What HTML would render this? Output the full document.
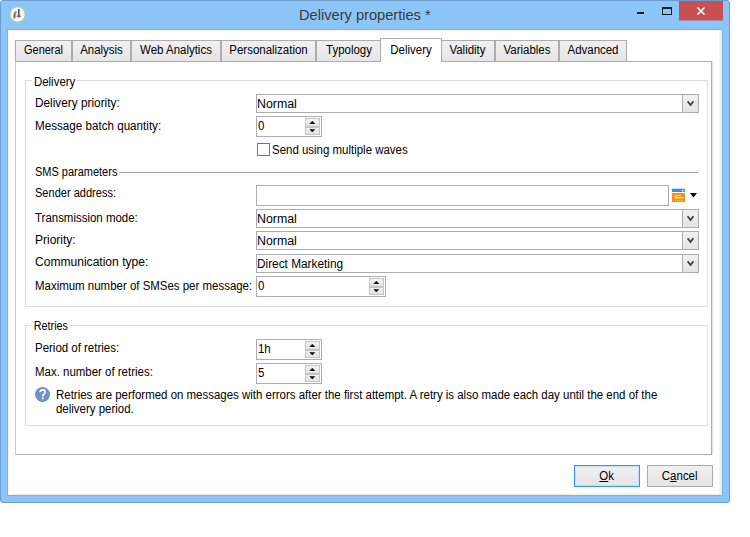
<!DOCTYPE html>
<html><head><meta charset="utf-8">
<style>
html,body{margin:0;padding:0;background:#fff;width:750px;height:537px;overflow:hidden;position:relative;font-family:"Liberation Sans",sans-serif}
.a{position:absolute;box-sizing:border-box}
.t{position:absolute;font-size:12px;line-height:14px;white-space:nowrap;color:#000;transform:scaleX(0.955);transform-origin:0 0}
#win{left:0;top:0;width:730px;height:503px;background:#8cc6f8;border:1px solid #6d9dcf;border-radius:3px}
#client{left:8px;top:30px;width:714px;height:465px;background:#fff;border-left:1px solid #fbf3ec;border-right:1px solid #e6e6e6;box-shadow:inset -2px 0 0 #f4f4f4;border-bottom:1px solid #f1ebe6;border-top:1px solid #fbf3ec}
.tab{position:absolute;box-sizing:border-box;top:40px;height:22px;border:1px solid #acacac;border-bottom:none;background:linear-gradient(#f0f0f0,#e5e5e5)}
.tab span{position:absolute;left:0;right:0;top:2px;text-align:center;font-size:12px;line-height:14px;white-space:nowrap;transform:scaleX(0.955);transform-origin:50% 0}
.tab.sel{top:38px;height:24px;background:#fff;z-index:3}
.tab.sel span{top:4px}
#page{left:15px;top:61px;width:697px;height:394px;border:1px solid #acacac;border-left-color:#c9c9c9;background:#fff;z-index:2;box-shadow:1px 0 0 #e8e8e8,2px 0 0 #f4f4f4}
.grp{position:absolute;box-sizing:border-box;border:1px solid #dcdcdc}
.glab{position:absolute;background:#fff;padding:0 2px;font-size:12px;line-height:14px;white-space:nowrap;transform:scaleX(0.955);transform-origin:0 0}
.combo{position:absolute;box-sizing:border-box;height:19px;border:1px solid #abadb3;background:#fff}
.combo .v{position:absolute;left:0px;top:2px;font-size:12px;line-height:14px;white-space:nowrap;transform:scaleX(0.955);transform-origin:0 0}
.combo .btn{position:absolute;right:0;top:0;bottom:0;width:16px;box-sizing:border-box;border-left:1px solid #acacac;background:linear-gradient(#f0f0f0,#e5e5e5)}
.spin{position:absolute;box-sizing:border-box;height:21px;border:1px solid #abadb3;background:#fff}
.spin .v{position:absolute;left:0.5px;top:2px;font-size:12px;line-height:14px;white-space:nowrap;transform:scaleX(0.955);transform-origin:0 0}
.spin .up,.spin .dn{position:absolute;right:1px;width:15px;height:8px;box-sizing:border-box;border:1px solid #c5c5c5;background:linear-gradient(#f2f2f2,#e4e4e4)}
.spin .up{top:1px;height:9px}
.spin .dn{top:10px}
.spin svg{position:absolute;left:-1px;top:-1px}
.btnb{position:absolute;box-sizing:border-box;height:22px;border:1px solid #acacac;background:linear-gradient(#f0f0f0,#e5e5e5);text-align:center;font-size:12px;line-height:21px}
.btnb span{display:inline-block;transform:scaleX(0.955)}
</style></head><body>
<div id="win" class="a"></div>
<!-- title bar -->
<svg class="a" style="left:8px;top:5px" width="20" height="20"><circle cx="9.6" cy="9.4" r="7.6" fill="#fafaf8" stroke="#a6d27a" stroke-width="1"/><rect x="10" y="4" width="1.6" height="8" fill="#4e574e"/><path d="M5.2 13.8 L5.8 8 L7.6 5.6 L8.8 7.2 L7.6 13.6 Z" fill="#9da29b"/><path d="M6 12.5 L6.5 8.5 L7.6 7.4" stroke="#5f665e" stroke-width="1" fill="none"/><ellipse cx="10.9" cy="11.3" rx="2" ry="1.3" fill="#6f756e"/></svg>
<div class="t" style="left:299px;top:6px;transform:scaleX(0.975);font-size:15px;line-height:18px;color:#3b3b3b">Delivery properties *</div>
<div class="a" style="left:637px;top:12px;width:7px;height:2px;background:#1c1c1c"></div>
<div class="a" style="left:662px;top:7px;width:10px;height:8px;border:1px solid #1a1a1a;border-top-width:2px"></div>
<div class="a" style="left:679px;top:1px;width:44px;height:20px;background:linear-gradient(#c75050 0,#c75050 19px,#a48aa8 19px)"></div>
<svg class="a" style="left:679px;top:1px" width="44" height="19"><path d="M18.5 6.5 L25.5 13.5 M25.5 6.5 L18.5 13.5" stroke="#fff" stroke-width="1.6"/></svg>

<div class="a" style="left:7px;top:29px;width:716px;height:467px;background:#7db2e4"></div>
<div id="client" class="a"></div>

<!-- tabs -->
<div class="tab" style="left:15px;width:57px"><span style="transform:scaleX(0.91)">General</span></div>
<div class="tab" style="left:72px;width:59px"><span>Analysis</span></div>
<div class="tab" style="left:131px;width:90px"><span>Web Analytics</span></div>
<div class="tab" style="left:221px;width:95px"><span>Personalization</span></div>
<div class="tab" style="left:316px;width:66px"><span>Typology</span></div>
<div class="tab sel" style="left:380px;width:62px"><span>Delivery</span></div>
<div class="tab" style="left:440px;width:55px"><span>Validity</span></div>
<div class="tab" style="left:495px;width:64px"><span>Variables</span></div>
<div class="tab" style="left:559px;width:68px"><span>Advanced</span></div>

<div id="page" class="a">
</div>

<div style="position:absolute;left:0;top:0;z-index:4">
<!-- group 1 -->
<div class="grp" style="left:25px;top:80px;width:683px;height:227px"></div>
<div class="glab" style="left:32px;top:75px">Delivery</div>
<div class="t" style="left:35px;top:96px;transform:scaleX(0.985)">Delivery priority:</div>
<div class="combo" style="left:256px;top:94px;width:443px"><span class="v" style="transform:scaleX(1.03)">Normal</span><div class="btn"><svg width="16" height="17" style="position:absolute;left:-1px;top:0"><path d="M5.6 6.3 L8.5 10.1 L11.4 6.3" fill="none" stroke="#46423f" stroke-width="1.85"/></svg></div></div>
<div class="t" style="left:35px;top:119px;transform:scaleX(0.97)">Message batch quantity:</div>
<div class="spin" style="left:256px;top:116px;width:66px"><span class="v">0</span><div class="up"><svg width="15" height="9"><path d="M4.3 6 L7.3 3 L10.3 6Z" fill="#000"/></svg></div><div class="dn"><svg width="15" height="8"><path d="M4.3 2.2 L10.3 2.2 L7.3 5.2Z" fill="#000"/></svg></div></div>
<div class="a" style="left:257px;top:143px;width:13px;height:13px;border:1px solid #767676;background:#fff"></div>
<div class="t" style="left:272px;top:143px">Send using multiple waves</div>

<div class="t" style="left:35px;top:165px;transform:scaleX(0.915)">SMS parameters</div>
<div class="a" style="left:119px;top:172px;width:579px;height:1px;background:#a0a0a0"></div>
<div class="t" style="left:35px;top:186px;transform:scaleX(0.92)">Sender address:</div>
<div class="combo" style="left:256px;top:185px;width:413px;height:21px"></div>
<svg class="a" style="left:672px;top:188px" width="26" height="15"><rect x="0" y="0.5" width="13" height="1" fill="#8fc6f2"/><rect x="0" y="1" width="13" height="3" fill="#3b8ede"/><rect x="10" y="1.8" width="1.5" height="1.4" fill="#fff"/><rect x="0" y="5" width="13" height="9" fill="#ef9418"/><rect x="2.5" y="7" width="6" height="1.2" fill="#fbe0b8"/><rect x="2.5" y="9" width="8.5" height="1.3" fill="#fde9cc"/><rect x="3" y="12" width="1" height="1" fill="#f9d8a8"/><rect x="5" y="12" width="1" height="1" fill="#f9d8a8"/><rect x="7" y="12" width="1" height="1" fill="#f9d8a8"/><rect x="9" y="12" width="1" height="1" fill="#f9d8a8"/><path d="M18 5 L25 5 L21.5 9.5Z" fill="#000"/></svg>
<div class="t" style="left:35px;top:211px">Transmission mode:</div>
<div class="combo" style="left:256px;top:209px;width:443px"><span class="v" style="transform:scaleX(1.03)">Normal</span><div class="btn"><svg width="16" height="17" style="position:absolute;left:-1px;top:0"><path d="M5.6 6.3 L8.5 10.1 L11.4 6.3" fill="none" stroke="#46423f" stroke-width="1.85"/></svg></div></div>
<div class="t" style="left:35px;top:233px;transform:scaleX(1.0)">Priority:</div>
<div class="combo" style="left:256px;top:231px;width:443px"><span class="v" style="transform:scaleX(1.03)">Normal</span><div class="btn"><svg width="16" height="17" style="position:absolute;left:-1px;top:0"><path d="M5.6 6.3 L8.5 10.1 L11.4 6.3" fill="none" stroke="#46423f" stroke-width="1.85"/></svg></div></div>
<div class="t" style="left:35px;top:255px;transform:scaleX(1.005)">Communication type:</div>
<div class="combo" style="left:256px;top:254px;width:443px"><span class="v" style="transform:scaleX(0.985)">Direct Marketing</span><div class="btn"><svg width="16" height="17" style="position:absolute;left:-1px;top:0"><path d="M5.6 6.3 L8.5 10.1 L11.4 6.3" fill="none" stroke="#46423f" stroke-width="1.85"/></svg></div></div>
<div class="t" style="left:35px;top:279px">Maximum number of SMSes per message:</div>
<div class="spin" style="left:256px;top:276px;width:130px"><span class="v">0</span><div class="up"><svg width="15" height="9"><path d="M4.3 6 L7.3 3 L10.3 6Z" fill="#000"/></svg></div><div class="dn"><svg width="15" height="8"><path d="M4.3 2.2 L10.3 2.2 L7.3 5.2Z" fill="#000"/></svg></div></div>

<!-- group 2 -->
<div class="grp" style="left:25px;top:325px;width:683px;height:101px"></div>
<div class="glab" style="left:32px;top:319px;transform:scaleX(0.9)">Retries</div>
<div class="t" style="left:35px;top:341px">Period of retries:</div>
<div class="spin" style="left:256px;top:339px;width:66px"><span class="v">1h</span><div class="up"><svg width="15" height="9"><path d="M4.3 6 L7.3 3 L10.3 6Z" fill="#000"/></svg></div><div class="dn"><svg width="15" height="8"><path d="M4.3 2.2 L10.3 2.2 L7.3 5.2Z" fill="#000"/></svg></div></div>
<div class="t" style="left:35px;top:365px">Max. number of retries:</div>
<div class="spin" style="left:256px;top:363px;width:66px"><span class="v">5</span><div class="up"><svg width="15" height="9"><path d="M4.3 6 L7.3 3 L10.3 6Z" fill="#000"/></svg></div><div class="dn"><svg width="15" height="8"><path d="M4.3 2.2 L10.3 2.2 L7.3 5.2Z" fill="#000"/></svg></div></div>
<svg class="a" style="left:35px;top:387px" width="15" height="15"><circle cx="7.5" cy="7.5" r="7.5" fill="#6e91c8"/><path d="M5.2 5.3 Q5.3 2.9 7.7 2.9 Q10.2 2.9 10.2 5.1 Q10.2 6.4 8.8 7.2 Q7.7 7.9 7.7 9.4" stroke="#fff" stroke-width="1.7" fill="none"/><rect x="6.85" y="10.5" width="1.7" height="1.8" fill="#fff"/></svg>
<div class="t" style="left:56px;top:388px">Retries are performed on messages with errors after the first attempt. A retry is also made each day until the end of the</div>
<div class="t" style="left:56px;top:402px">delivery period.</div>
</div>

<!-- buttons -->
<div class="btnb" style="left:574px;top:465px;width:66px;border-color:#3d95ee;box-shadow:inset 0 0 0 1px #c4e0f9"><span><u>O</u>k</span></div>
<div class="btnb" style="left:647px;top:465px;width:66px"><span>C<u>a</u>ncel</span></div>
</body></html>
